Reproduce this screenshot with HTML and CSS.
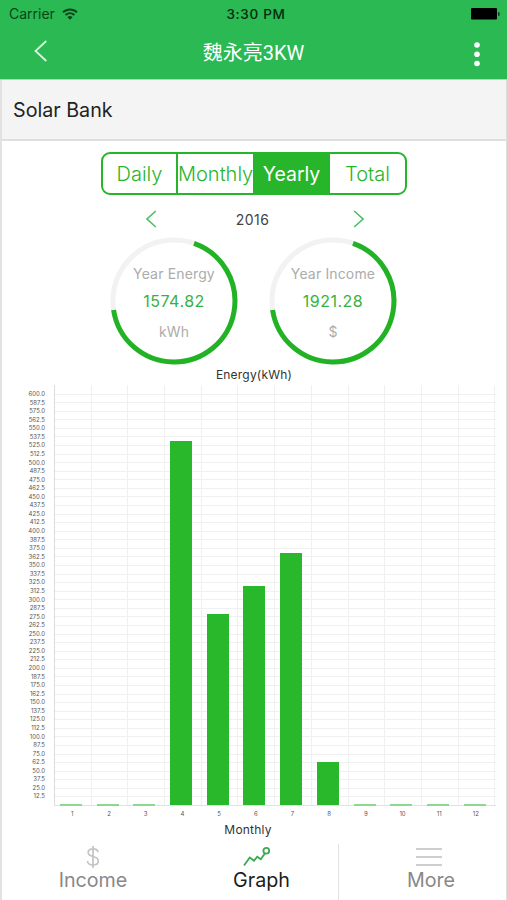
FILE: index.html
```html
<!DOCTYPE html>
<html lang="en">
<head>
  <meta charset="UTF-8">
  <meta name="viewport" content="width=device-width, initial-scale=1.0">
  <title>Solar Bank</title>
  <link rel="stylesheet" href="styles.css">
</head>
<body>
  <div class="app">
    <header>
      <div class="status-bar">
        <span class="carrier">Carrier
          <svg width="16" height="12" viewBox="0 0 16 12" fill="none" stroke="#07461a" stroke-width="2">
            <path d="M1 4.3C5 .4 11 .4 15 4.3M3.6 7C6.2 4.6 9.8 4.6 12.4 7"/>
            <path d="M8 11.8L5.4 9.2Q8 7 10.6 9.2Z" fill="#07461a" stroke="none"/>
          </svg>
        </span>
        <span class="time">3:30 PM</span>
        <svg class="battery" width="29" height="12" viewBox="0 0 29 12">
          <rect width="26" height="11.5" rx="1" fill="#000"/>
          <rect x="27" y="4" width="1.6" height="4" rx="0.8" fill="#07461a"/>
        </svg>
      </div>
      <div class="title-bar">
        <svg class="back" width="14" height="22" viewBox="0 0 14 22" fill="none" stroke="#d8f5df" stroke-width="1.8">
          <path d="M12.3 1L1.5 11L12.3 21"/>
        </svg>
        <h1>魏永亮3KW</h1>
        <svg class="menu" width="6" height="25" viewBox="0 0 6 25" fill="#fff">
          <circle cx="3" cy="3" r="2.8"/>
          <circle cx="3" cy="12.3" r="2.8"/>
          <circle cx="3" cy="21.5" r="2.8"/>
        </svg>
      </div>
    </header>

    <main>
      <h2>Solar Bank</h2>

      <!-- Period switch -->
      <div class="tabs">
        <button>Daily</button>
        <button>Monthly</button>
        <button class="active">Yearly</button>
        <button>Total</button>
      </div>

      <div class="year">
        <svg width="11" height="18" viewBox="0 0 11 18"><path d="M9.8 1L1 9L9.8 17"/></svg>
        <span>2016</span>
        <svg width="11" height="18" viewBox="0 0 11 18"><path d="M1.2 1L10 9L1.2 17"/></svg>
      </div>

      <!-- Totals -->
      <div class="rings">
        <div class="ring">
          <svg width="128" height="128" viewBox="0 0 128 128">
            <circle cx="64" cy="64" r="61"/>
            <path d="M84 6.4A61 61 0 1 1 3.6 73"/>
          </svg>
          <span class="label">Year Energy</span>
          <span class="value">1574.82</span>
          <span class="unit">kWh</span>
        </div>
        <div class="ring">
          <svg width="128" height="128" viewBox="0 0 128 128">
            <circle cx="64" cy="64" r="61"/>
            <path d="M84 6.4A61 61 0 1 1 3.6 73"/>
          </svg>
          <span class="label">Year Income</span>
          <span class="value">1921.28</span>
          <span class="unit">$</span>
        </div>
      </div>

      <!-- Chart -->
      <div class="chart">
        <h3>Energy(kWh)</h3>
        <div class="chart-body">
          <div class="y-axis" id="y-axis"></div>
          <div class="plot" id="plot"></div>
        </div>
        <div class="x-axis" id="x-axis"></div>
        <h4>Monthly</h4>
      </div>

      <nav>
        <a class="nav-item">
          <svg width="14" height="22" viewBox="0 0 14 22" fill="none" stroke="#c4c4c4" stroke-width="1.7">
            <path d="M12 6.2C11.8 3.9 9.7 2.8 7 2.8C4.2 2.8 2.2 4.1 2.2 6.5C2.2 12 12.3 9 12.3 15C12.3 17.6 9.9 19 7 19C3.9 19 1.8 17.7 1.5 15M7 0V22"/>
          </svg>
          <span>Income</span>
        </a>
        <a class="nav-item current">
          <svg width="28" height="22" viewBox="0 0 28 22" fill="none" stroke="#38a951" stroke-width="1.8">
            <path d="M1 19.5L6.8 11.5L11 14.7L14.3 10.7L17.8 13.2L22 7.2"/>
            <circle cx="23.3" cy="4.7" r="2.9"/>
          </svg>
          <span>Graph</span>
        </a>
        <a class="nav-item last">
          <svg width="26" height="22" viewBox="0 0 26 22" fill="none" stroke="#cfcfcf" stroke-width="2">
            <path d="M0 3H26M0 11H26M0 19H26"/>
          </svg>
          <span>More</span>
        </a>
      </nav>
    </main>
  </div>
  <script src="script.js"></script>
</body>
</html>
```

FILE: styles.css
```css
body {
  margin: 0;
  background-color: #fff;
  color: #222;
  font-family: Inter, "Noto Sans CJK SC", sans-serif;
}

.app {
  width: 507px;
  height: 900px;
  overflow: hidden;
}

/* Header */
header {
  height: 79px;
  background-color: #2ab952;
  border-bottom: 1px solid #a5dfb4;
}

.status-bar {
  display: grid;
  grid-template-columns: 1fr auto 1fr;
  align-items: center;
  height: 27px;
  padding: 0 7px 0 9px;
  font-size: 14px;
}

.carrier {
  display: flex;
  align-items: center;
  gap: 7px;
  color: #07461a;
}

.time {
  margin-left: 3px;
  color: #052b0f;
  font-size: 13.5px;
  font-weight: 500;
  letter-spacing: 0.7px;
}

.battery {
  justify-self: end;
}

.title-bar {
  display: grid;
  grid-template-columns: 1fr auto 1fr;
  align-items: center;
  height: 50px;
  padding: 0 27px 0 34px;
}

.title-bar .back {
  margin-top: -3px;
}

.title-bar h1 {
  margin: 2px 7px 0 0;
  color: #fff;
  font-family: Roboto, "Noto Sans CJK SC", sans-serif;
  font-size: 20px;
  font-weight: 400;
  line-height: 28px;
}

.title-bar .menu {
  justify-self: end;
  margin-top: 5px;
}

/* Page */
main {
  box-sizing: border-box;
  height: 820px;
  border-left: 2px solid #e2e2e2;
  border-right: 1px solid #dedede;
}

h2 {
  height: 59px;
  margin: 0;
  padding-left: 11px;
  background-color: #f4f4f4;
  border-bottom: 2px solid #dfdfdf;
  font-size: 19.7px;
  font-weight: 400;
  line-height: 61px;
}

/* Period switch */
.tabs {
  box-sizing: border-box;
  display: grid;
  grid-template-columns: 75px 75px 77px 75px;
  width: 306px;
  height: 43px;
  margin: 11px 0 0 99px;
  border: 2px solid #27b52b;
  border-radius: 9px;
  overflow: hidden;
}

.tabs button {
  padding: 1px 0 0;
  background: none;
  border: none;
  color: #27b52b;
  font: 300 20px Inter, sans-serif;
  white-space: nowrap;
}

.tabs button:first-child {
  border-right: 2px solid #27b52b;
}

.tabs button.active {
  background-color: #27b52b;
  color: #fff;
  font-size: 19.5px;
  font-weight: 400;
}

.year {
  display: flex;
  justify-content: space-between;
  align-items: center;
  width: 218px;
  height: 48px;
  margin-left: 144px;
  color: #444;
  font-size: 14px;
  letter-spacing: 0.5px;
}

.year span {
  margin-right: 5px;
}

.year svg {
  fill: none;
  stroke: #4bbf66;
  stroke-width: 1.6;
}

/* Totals */
.rings {
  display: flex;
  gap: 31px;
  height: 128px;
  margin: -6px 0 0 108px;
}

.ring {
  display: grid;
  grid-template-rows: 22px 33px 28px;
  align-content: start;
  justify-items: center;
  align-items: center;
  box-sizing: border-box;
  width: 128px;
  height: 128px;
  padding-top: 25px;
  position: relative;
}

.ring svg {
  position: absolute;
  top: 0;
  left: 0;
  fill: none;
  stroke-width: 5;
}

.ring circle {
  stroke: #f2f2f2;
}

.ring path {
  stroke: #21b324;
}

.ring .label,
.ring .unit {
  color: #acacac;
  font-size: 14px;
  letter-spacing: 0.15px;
}

.ring .value {
  color: #35b33e;
  font-size: 16px;
  letter-spacing: 0.5px;
}

/* Chart */
.chart h3,
.chart h4 {
  margin: 0;
  color: #333;
  font-size: 12px;
  font-weight: 400;
  letter-spacing: 0.2px;
  text-align: center;
}

.chart h3 {
  height: 20px;
  line-height: 20px;
}

.chart-body {
  display: flex;
  height: 421px;
}

.y-axis {
  display: flex;
  flex-direction: column;
  width: 43px;
  padding-top: 5px;
  color: #555;
  font-size: 6px;
  text-align: right;
}

.y-axis span {
  flex: none;
  height: 8.57px;
  line-height: 8.57px;
}

.plot {
  box-sizing: border-box;
  display: grid;
  grid-template-columns: repeat(12, 36.7px);
  width: 442px;
  margin-left: 9px;
  border-bottom: 1px solid #e2e2e2;
  border-left: 1px solid #dcdcdc;
  background: repeating-linear-gradient(to top, transparent 0, transparent 7.57px, #f0f0f0 7.57px, #f0f0f0 8.57px) 0 bottom / 100% 412px no-repeat;
}

.slot {
  display: flex;
  align-items: flex-end;
  border-right: 1px solid #f0f0f0;
  padding-left: 5px;
}

.bar {
  width: 22px;
  background-color: #29b82b;
}

.bar.empty {
  height: 1px;
  margin-bottom: -1px;
  background-color: #8dd890;
  border-bottom: 1px solid #8dd890;
}

.x-axis {
  display: grid;
  grid-template-columns: repeat(12, 36.7px);
  height: 16px;
  margin-left: 52px;
  color: #555;
  font-size: 6px;
  line-height: 16px;
  text-align: center;
}

.chart h4 {
  height: 15px;
  margin-right: 12px;
  line-height: 15px;
}

/* Bottom navigation */
nav {
  display: grid;
  grid-template-columns: 165px 171px 168px;
  height: 56px;
  margin-top: 7px;
}

.nav-item {
  box-sizing: border-box;
  display: flex;
  flex-direction: column;
  align-items: center;
  padding: 2px 0 0 17px;
  color: #888;
  font-size: 19.7px;
  line-height: 24px;
}

.nav-item.current {
  padding-left: 18px;
  color: #1c1c1c;
}

.nav-item.current svg {
  margin-right: 10px;
}

.nav-item.last {
  border-left: 1px solid #e2e2e2;
}

.nav-item.last svg {
  margin-right: 5px;
}
```

FILE: script.js
```js
const MAX = 600;
const STEP = 12.5;
const PX_PER_STEP = 8.57;

// energy per month, kWh
const energy = [0.5, 0, 0, 531, 278.5, 319.5, 367.5, 62.5, 0, 0, 0, 0];

const yAxis = document.getElementById('y-axis');
const plot = document.getElementById('plot');
const xAxis = document.getElementById('x-axis');

for (let v = MAX; v > 0; v -= STEP) {
  const label = document.createElement('span');
  label.textContent = v.toFixed(1);
  yAxis.appendChild(label);
}

energy.forEach((value, i) => {
  const slot = document.createElement('div');
  slot.className = 'slot';

  const bar = document.createElement('div');
  bar.className = value < 1 ? 'bar empty' : 'bar';
  if (value >= 1) {
    bar.style.height = (value / STEP * PX_PER_STEP) + 'px';
  }
  slot.appendChild(bar);
  plot.appendChild(slot);

  const month = document.createElement('span');
  month.textContent = i + 1;
  xAxis.appendChild(month);
});
```
